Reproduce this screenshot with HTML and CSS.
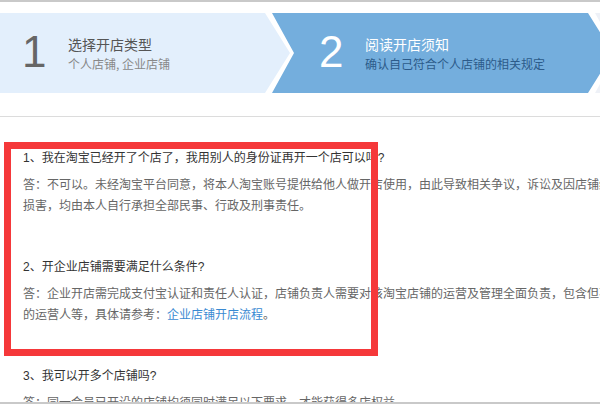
FILE: index.html
```html
<!DOCTYPE html>
<html lang="zh-CN">
<head>
<meta charset="utf-8">
<title>开店须知</title>
<link rel="stylesheet" href="styles.css">
</head>
<body>
<div class="page">
  <div class="steps">
    <div class="step step-done">
      <span class="step-num">1</span>
      <div class="step-text">
        <div class="step-title">选择开店类型</div>
        <div class="step-sub">个人店铺, 企业店铺</div>
      </div>
    </div>
    <div class="step step-active">
      <span class="step-num">2</span>
      <div class="step-text">
        <div class="step-title">阅读开店须知</div>
        <div class="step-sub">确认自己符合个人店铺的相关规定</div>
      </div>
    </div>
    <div class="step step-next"></div>
  </div>
  <div class="content">
    <div class="faq">
      <p class="question">1、我在淘宝已经开了个店了，我用别人的身份证再开一个店可以吗?</p>
      <p class="answer">答：不可以。未经淘宝平台同意，将本人淘宝账号提供给他人做开店使用，由此导致相关争议，诉讼及因店铺经营造成的<br>损害，均由本人自行承担全部民事、行政及刑事责任。</p>
    </div>
    <div class="faq">
      <p class="question">2、开企业店铺需要满足什么条件?</p>
      <p class="answer">答：企业开店需完成支付宝认证和责任人认证，店铺负责人需要对该淘宝店铺的运营及管理全面负责，包含但不限于店铺<br>的运营人等，具体请参考：<a class="link" href="#">企业店铺开店流程</a>。</p>
    </div>
    <div class="faq">
      <p class="question">3、我可以开多个店铺吗?</p>
      <p class="answer">答：同一会员已开设的店铺均须同时满足以下要求，才能获得多店权益</p>
    </div>
    <div class="highlight"></div>
  </div>
</div>
</body>
</html>
```

FILE: styles.css
```css
* { box-sizing: border-box; }
html, body { margin: 0; padding: 0; background: #fff; }
body {
  font-family: "Liberation Sans", Arial, "Noto Sans CJK SC", sans-serif;
  overflow: hidden;
}
.page {
  width: 600px;
  height: 404px;
  overflow: hidden;
  border-top: 2px solid #c9c9c9;
  border-bottom: 2px solid #c9c9c9;
  display: flex;
  flex-direction: column;
}
.steps {
  display: flex;
  margin-top: 11px;
  height: 80px;
  flex-shrink: 0;
}
.step {
  display: flex;
  align-items: center;
  flex-shrink: 0;
  height: 80px;
}
.step-done {
  width: 290px;
  background: #e3effc;
  padding-left: 22px;
  clip-path: polygon(0 0, 265px 0, 100% 50%, 265px 100%, 0 100%);
}
.step-active {
  width: 341px;
  margin-left: -18px;
  background: #74aedd;
  padding-left: 47px;
  clip-path: polygon(0 0, 316px 0, 100% 50%, 316px 100%, 0 100%, 22px 50%);
}
.step-next {
  width: 200px;
  margin-left: -18px;
  background: #eef1f7;
  clip-path: polygon(0 0, 100% 0, 100% 100%, 0 100%, 22px 50%);
}
.step-num {
  font-size: 44px;
  line-height: 1;
  color: #666;
  width: 24px;
  margin-right: 22px;
  margin-top: -2px;
}
.step-active .step-num { color: #fff; }
.step-text {
  font-family: "Noto Sans CJK SC", sans-serif;
  white-space: nowrap;
}
.step-title {
  font-size: 14px;
  line-height: 20px;
  color: #555;
}
.step-sub {
  font-size: 12px;
  line-height: 18px;
  color: #888;
  margin-top: 1px;
}
.step-active .step-title { color: #fff; }
.step-active .step-sub { color: #2c5b8a; }

.content {
  position: relative;
  margin-top: 23px;
  border-top: 1px solid #dcdcdc;
  padding: 31px 0 0 23px;
  flex: 1;
  font-family: "Liberation Sans", Arial, "Noto Sans CJK SC", sans-serif;
  font-size: 12px;
}
.faq { margin-bottom: 40px; }
.question {
  margin: 0 0 6px;
  line-height: 21px;
  color: #333;
  white-space: nowrap;
}
.answer {
  margin: 0;
  line-height: 21px;
  color: #666;
  white-space: nowrap;
}
.faq:last-of-type .question { margin-bottom: 3px; }
.link { color: #3a8ad2; text-decoration: none; }
.highlight {
  position: absolute;
  left: 4px;
  top: 25px;
  width: 374px;
  height: 214px;
  border: 7px solid #f5383a;
}
```
